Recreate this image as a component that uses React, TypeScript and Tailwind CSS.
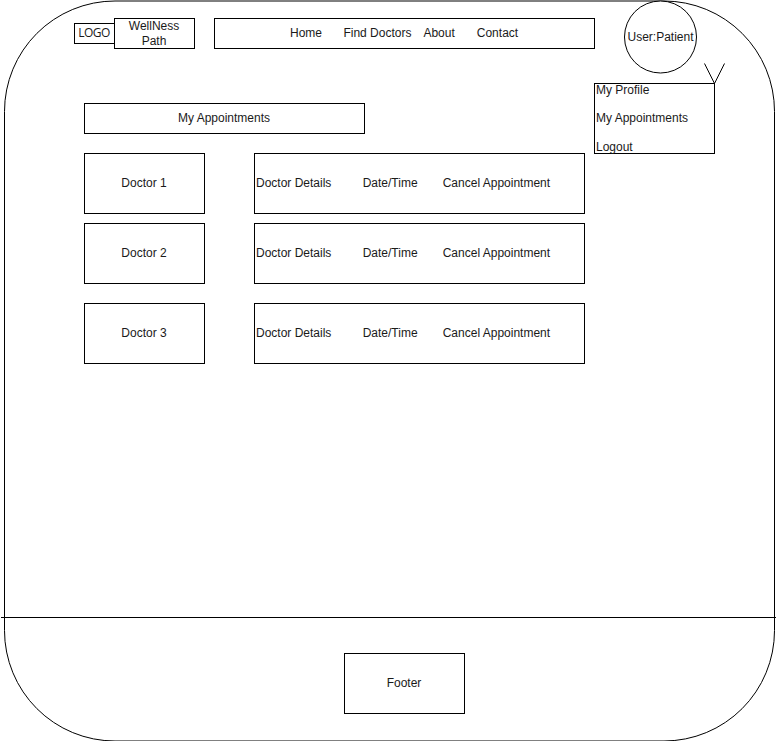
import React from "react";

const box = "flex items-center justify-center border border-black bg-white pr-px text-center";

const appointments = [
  { doctor: "Doctor 1", spacing: "mt-[19px]" },
  { doctor: "Doctor 2", spacing: "mt-[9px]" },
  { doctor: "Doctor 3", spacing: "mt-[19px]" },
];

function Header() {
  return (
    <header className="flex h-[74px] items-start pl-[74px]">
      <div className={`${box} mt-[23px] h-[21px] w-[41px] font-['Open_Sans','Noto_Sans',sans-serif] tracking-[-0.5px]`}>
        LOGO
      </div>
      <div className={`${box} -ml-px mt-[18px] h-[31px] w-[81px]`}>
        WellNess
        <br />
        Path
      </div>
      <nav className="ml-[19px] mt-[18px] flex h-[31px] w-[381px] items-center whitespace-nowrap border border-black bg-white pl-[75px]">
        <a className="w-[53.4px]">Home</a>
        <a className="w-[80px]">Find Doctors</a>
        <a className="w-[53.4px]">About</a>
        <a>Contact</a>
      </nav>
      <div className="ml-[29px] flex h-[73px] w-[73px] translate-y-[0.5px] items-center justify-center whitespace-nowrap rounded-full border border-black bg-white">
        User:Patient
      </div>
    </header>
  );
}

function UserMenu() {
  return (
    <div className="absolute left-[594px] top-[63px]">
      <svg className="absolute left-[110px] top-0" width="22" height="21" viewBox="0 0 22 21" fill="none" stroke="#000">
        <path d="M0.5 0.5L10.5 20.5L20.5 0.5" />
      </svg>
      <ul className="mt-5 h-[71px] w-[121px] whitespace-nowrap border border-black bg-white pl-px">
        <li className="-mt-px h-[28px]">My Profile</li>
        <li className="h-[29px]">My Appointments</li>
        <li>Logout</li>
      </ul>
    </div>
  );
}

export default function App() {
  return (
    <div className="relative h-[741px] w-[778px] overflow-hidden bg-white font-['Liberation_Sans',Arial,sans-serif] text-[12px] leading-[14.4px] text-[#1a1a1a]">
      <div className="absolute left-[4px] top-0 h-[741px] w-[771px] translate-y-[0.5px] rounded-[111px] border border-black" />
      <div className="relative flex h-full flex-col">
        <Header />
        <main className="h-[543px] pl-[84px] pt-[29px]">
          <h1 className={`${box} h-[31px] w-[281px]`}>My Appointments</h1>
          {appointments.map(({ doctor, spacing }) => (
            <section key={doctor} className={`${spacing} flex gap-[49px]`}>
              <div className={`${box} h-[61px] w-[121px]`}>{doctor}</div>
              <div className="flex h-[61px] w-[331px] items-center whitespace-nowrap border border-black bg-white pl-px">
                <span className="w-[106.7px]">Doctor Details</span>
                <span className="w-[80px]">Date/Time</span>
                <span>Cancel Appointment</span>
              </div>
            </section>
          ))}
        </main>
        <footer className="ml-px w-[775px] border-t border-black pl-[343px] pt-[35px]">
          <div className={`${box} h-[61px] w-[121px]`}>Footer</div>
        </footer>
      </div>
      <UserMenu />
    </div>
  );
}
